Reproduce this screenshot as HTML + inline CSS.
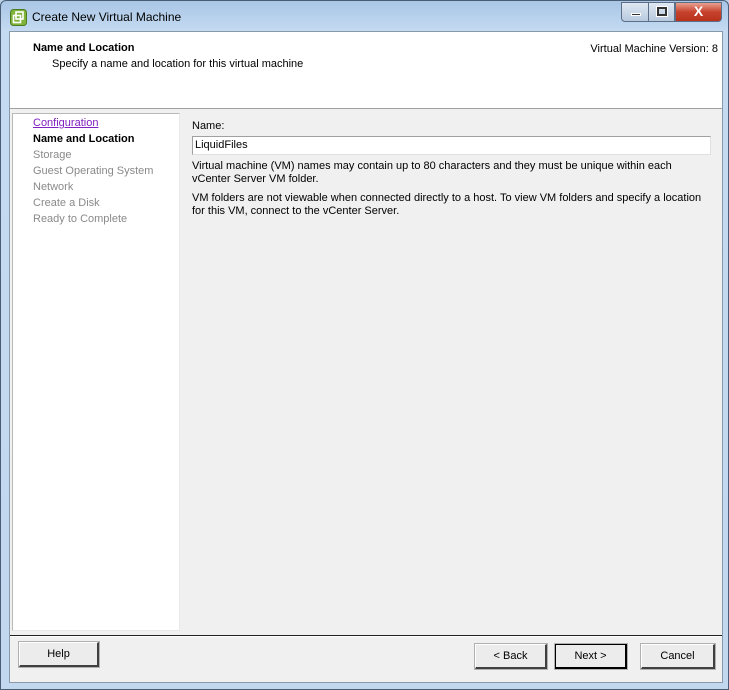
<!DOCTYPE html>
<html><head><style>
*{margin:0;padding:0;box-sizing:border-box}
body{width:729px;height:690px;overflow:hidden;position:relative;font-family:"Liberation Sans",sans-serif;font-size:11px;color:#000;background:#bcd3ec}
.frame{position:absolute;left:0;top:0;width:729px;height:690px;background:linear-gradient(180deg,#a9c6e6 0,#c4daf1 30px,#c2d8ef 100%);border:1px solid #4a5d74;border-radius:6px 6px 0 0}
.title{position:absolute;left:31px;top:9px;font-size:12px;color:#000}
.client{position:absolute;left:8px;top:30px;width:714px;height:652px;background:#f0f0f0;border:1px solid #8899aa}
.hdr{position:absolute;left:0;top:0;width:712px;height:77px;background:#fff;border-bottom:1px solid #a0a0a0}
.abs{position:absolute;white-space:nowrap}
.left{position:absolute;left:2px;top:81px;width:168px;height:518px;background:#fff;border:1px solid #b8b8b8;border-right-color:#e8e8e8;border-bottom-color:#e8e8e8}
.gr{color:#8a8a8a}
.btn{position:absolute;height:25px;background:#ececec;border:1px solid #fff;border-right:2px solid #404040;border-bottom:2px solid #404040;outline:1px solid #b0b0b0;text-align:center;line-height:22px;font-size:11px}
.sep{position:absolute;left:0;top:603px;width:712px;height:2px;border-top:1px solid #202020;border-bottom:1px solid #fff}
.ctl{position:absolute;top:1px;height:20px;border:1px solid #5b6f88;}
</style></head><body>
<div class="frame">
 <svg style="position:absolute;left:9px;top:8px" width="17" height="17" viewBox="0 0 17 17"><rect x="0.5" y="0.5" width="16" height="16" rx="3" fill="#7fb33a" stroke="#4b7d1e"/><rect x="6" y="3" width="7" height="7" fill="none" stroke="#fff" stroke-width="1.6"/><rect x="3.5" y="6.5" width="7" height="7" fill="none" stroke="#fff" stroke-width="1.6"/></svg>
 <div class="title">Create New Virtual Machine</div>
 <div class="ctl" style="left:620px;width:28px;border-radius:0 0 0 4px;background:linear-gradient(#dfe8f3,#b8c9de)"><div style="position:absolute;left:9px;top:10px;width:10px;height:3px;background:#333;border:1px solid #fff"></div></div>
 <div class="ctl" style="left:647px;width:27px;background:linear-gradient(#dfe8f3,#b8c9de)"><div style="position:absolute;left:8px;top:4px;width:10px;height:9px;border:2px solid #333;outline:1px solid #fff"></div></div>
 <div class="ctl" style="left:674px;width:47px;border-radius:0 0 4px 0;background:linear-gradient(#e8a090,#c7422c 50%,#b8321c);color:#fff;font-weight:bold;font-size:14px;text-align:center;line-height:17px">X</div>
 <div class="client">
  <div class="hdr">
   <div class="abs" style="left:23px;top:10px;font-weight:bold">Name and Location</div>
   <div class="abs" style="left:42px;top:26px">Specify a name and location for this virtual machine</div>
   <div class="abs" style="right:4px;top:11px">Virtual Machine Version: 8</div>
  </div>
  <div class="left">
   <div class="abs" style="left:20px;top:3px;color:#8020c0;text-decoration:underline">Configuration</div>
   <div class="abs" style="left:20px;top:19px;font-weight:bold">Name and Location</div>
   <div class="abs gr" style="left:20px;top:35px">Storage</div>
   <div class="abs gr" style="left:20px;top:51px">Guest Operating System</div>
   <div class="abs gr" style="left:20px;top:67px">Network</div>
   <div class="abs gr" style="left:20px;top:83px">Create a Disk</div>
   <div class="abs gr" style="left:20px;top:99px">Ready to Complete</div>
  </div>
  <div class="abs" style="left:182px;top:88px">Name:</div>
  <div class="abs" style="left:182px;top:104px;width:519px;height:19px;background:#fff;border:1px solid #a0a0a0;border-right-color:#e0e0e0;border-bottom-color:#e0e0e0;padding:2px 2px;line-height:13px">LiquidFiles</div>
  <div class="abs" style="left:182px;top:128px;line-height:13px">Virtual machine (VM) names may contain up to 80 characters and they must be unique within each<br>vCenter Server VM folder.</div>
  <div class="abs" style="left:182px;top:160px;line-height:13px">VM folders are not viewable when connected directly to a host. To view VM folders and specify a location<br>for this VM, connect to the vCenter Server.</div>
  <div class="sep"></div>
  <div class="btn" style="left:9px;top:610px;width:80px">Help</div>
  <div class="btn" style="left:465px;top:612px;width:72px">&lt; Back</div>
  <div class="btn" style="left:545px;top:612px;width:72px;border:1px solid #000;border-right:2px solid #000;border-bottom:2px solid #000">Next &gt;</div>
  <div class="btn" style="left:631px;top:612px;width:74px">Cancel</div>
 </div>
</div>
</body></html>
